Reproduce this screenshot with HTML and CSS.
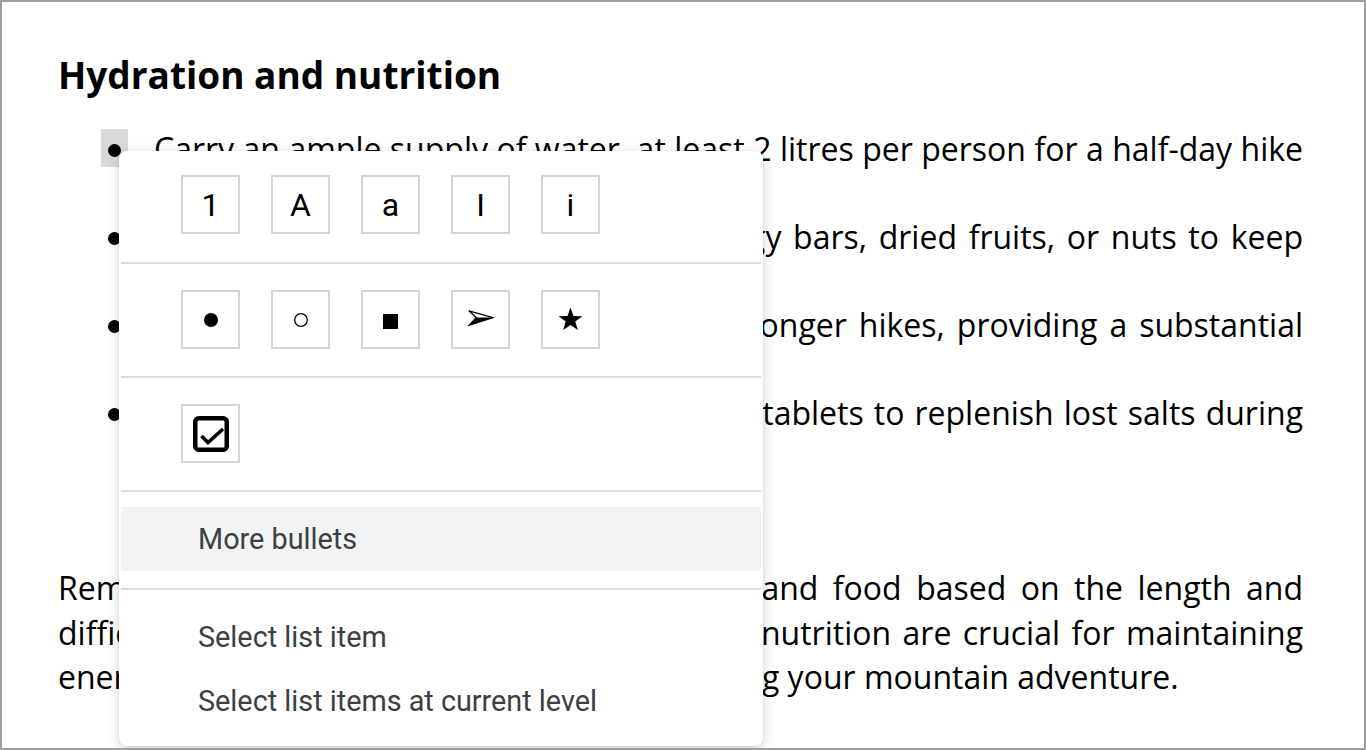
FILE: index.html
```html
<!DOCTYPE html>
<html lang="en">
<head>
<meta charset="utf-8">
<title>Hydration and nutrition</title>
<link rel="stylesheet" href="styles.css">
</head>
<body>
<div class="page">
  <h2 class="title">Hydration and nutrition</h2>
  <ul class="list">
    <li class="item"><span class="mark"><span class="dot-box selected"><span class="dot"></span></span></span><span class="text">Carry an ample supply of water, at least 2 litres per person for a half-day hike during hot weather.</span></li>
    <li class="item"><span class="mark"><span class="dot-box"><span class="dot"></span></span></span><span class="text">Bring high-energy snacks, such as energy bars, dried fruits, or nuts to keep yourself energized on the trail.</span></li>
    <li class="item"><span class="mark"><span class="dot-box"><span class="dot"></span></span></span><span class="text">Pack a hearty lunch or sandwiches for longer hikes, providing a substantial energy boost.</span></li>
    <li class="item"><span class="mark"><span class="dot-box"><span class="dot"></span></span></span><span class="text">Consider including electrolyte drinks, or tablets to replenish lost salts during strenuous activity.</span></li>
  </ul>
  <p class="para">Remember to calculate your intake of water and food based on the length and difficulty of the hike. Adequate hydration and nutrition are crucial for maintaining energy levels and your general well-being during your mountain adventure.</p>

  <div class="menu">
    <div class="menu-row">
      <span class="opt"><span class="opt-text">1</span></span>
      <span class="opt"><span class="opt-text">A</span></span>
      <span class="opt"><span class="opt-text">a</span></span>
      <span class="opt"><span class="opt-text">I</span></span>
      <span class="opt"><span class="opt-text">i</span></span>
    </div>
    <div class="sep"></div>
    <div class="menu-row">
      <span class="opt"><svg class="g-disc" viewBox="0 0 14 14" width="14" height="14"><circle cx="7" cy="7" r="7" fill="#000"/></svg></span>
      <span class="opt"><svg class="g-circle" viewBox="0 0 14 14" width="14" height="14"><circle cx="7" cy="7" r="6.3" fill="none" stroke="#000" stroke-width="1.3"/></svg></span>
      <span class="opt"><svg class="g-square" viewBox="0 0 15 15" width="15" height="15"><rect x="0" y="0" width="15" height="15" fill="#000"/></svg></span>
      <span class="opt"><svg class="g-arrow" viewBox="0 0 26 16" width="26" height="16"><polygon points="0.8,0.8 25.2,7.6 1.2,15.2 8.2,7.6" fill="none" stroke="#000" stroke-width="1.3" stroke-linejoin="miter"/><polygon points="8.2,7.6 25.2,7.6 1.2,15.2" fill="#000"/></svg></span>
      <span class="opt"><svg class="g-star" viewBox="0 0 25 24" width="25" height="24"><polygon points="12.5,0.5 15.44,8.95 24.39,9.14 17.26,14.55 19.85,23.11 12.5,18 5.15,23.11 7.74,14.55 0.61,9.14 9.56,8.95" fill="#000"/></svg></span>
    </div>
    <div class="sep"></div>
    <div class="menu-row">
      <span class="opt"><svg viewBox="0 0 36 36" width="36" height="36"><rect x="2.25" y="2.25" width="31.5" height="31.5" rx="3.5" fill="none" stroke="#000" stroke-width="4.5"/><polyline points="8.5,20 15,26.5 30,13" fill="none" stroke="#000" stroke-width="3.6"/></svg></span>
    </div>
    <div class="sep"></div>
    <div class="menu-group first">
      <div class="menu-item active">More bullets</div>
    </div>
    <div class="sep"></div>
    <div class="menu-group last">
      <div class="menu-item">Select list item</div>
      <div class="menu-item">Select list items at current level</div>
    </div>
  </div>
</div>
</body>
</html>
```
FILE: styles.css
```css
* { box-sizing: border-box; }
html, body { margin: 0; padding: 0; background: #fff; }
.page {
  position: relative;
  width: 1366px;
  height: 750px;
  border: 2px solid #9d9d9d;
  padding: 48px 61px 0 56px;
  overflow: hidden;
  font-family: "Open Sans", "Noto Sans", sans-serif;
  color: #000;
}
.title {
  margin: 0;
  font-size: 37px;
  font-weight: 700;
  line-height: 50px;
}
.list {
  list-style: none;
  margin: 27px 0 0 0;
  padding: 0;
}
.item {
  display: flex;
  font-size: 32px;
  line-height: 44px;
  text-align: justify;
}
.mark {
  flex: none;
  width: 96px;
  padding-left: 43px;
  padding-top: 2px;
}
.dot-box {
  display: flex;
  align-items: center;
  justify-content: center;
  width: 27px;
  height: 38px;
  padding-top: 4px;
}
.dot-box.selected { background: #d9d9d9; }
.dot {
  width: 13px;
  height: 13px;
  border-radius: 50%;
  background: #000;
}
.text { flex: 1; }
.para {
  margin: 87px 0 0 0;
  font-size: 32px;
  line-height: 44.5px;
  text-align: justify;
}
.menu {
  position: absolute;
  left: 117px;
  top: 149px;
  width: 644px;
  height: 595px;
  background: #fff;
  border-radius: 8px;
  box-shadow: 0 3px 14px rgba(0, 0, 0, 0.16), 0 1px 3px rgba(0, 0, 0, 0.08);
  padding: 0 2px;
  font-family: Roboto, "Liberation Sans", sans-serif;
}
.menu-row {
  display: flex;
  gap: 31px;
  padding: 24px 0 28px 60px;
}
.menu-row + .sep + .menu-row { padding: 26px 0 27px 60px; }
.opt {
  display: flex;
  align-items: center;
  justify-content: center;
  width: 59px;
  height: 59px;
  border: 2px solid #d4d4d4;
  background: #fff;
}
.opt-text {
  font-size: 32px;
  line-height: 1;
  color: #000;
}
.g-square { margin-top: 3px; }
.g-arrow { margin-top: -3px; }
.g-star { margin-top: -1px; }
.sep {
  height: 2px;
  background: #dadce0;
}
.menu-group.first { padding: 15px 0 17px 0; }
.menu-group.last { padding: 15px 0 13px 0; }
.menu-item {
  height: 64px;
  display: flex;
  align-items: center;
  padding-left: 77px;
  font-size: 28.8px;
  color: #3c4043;
}
.menu-item.active { background: #f1f3f4; }
```
